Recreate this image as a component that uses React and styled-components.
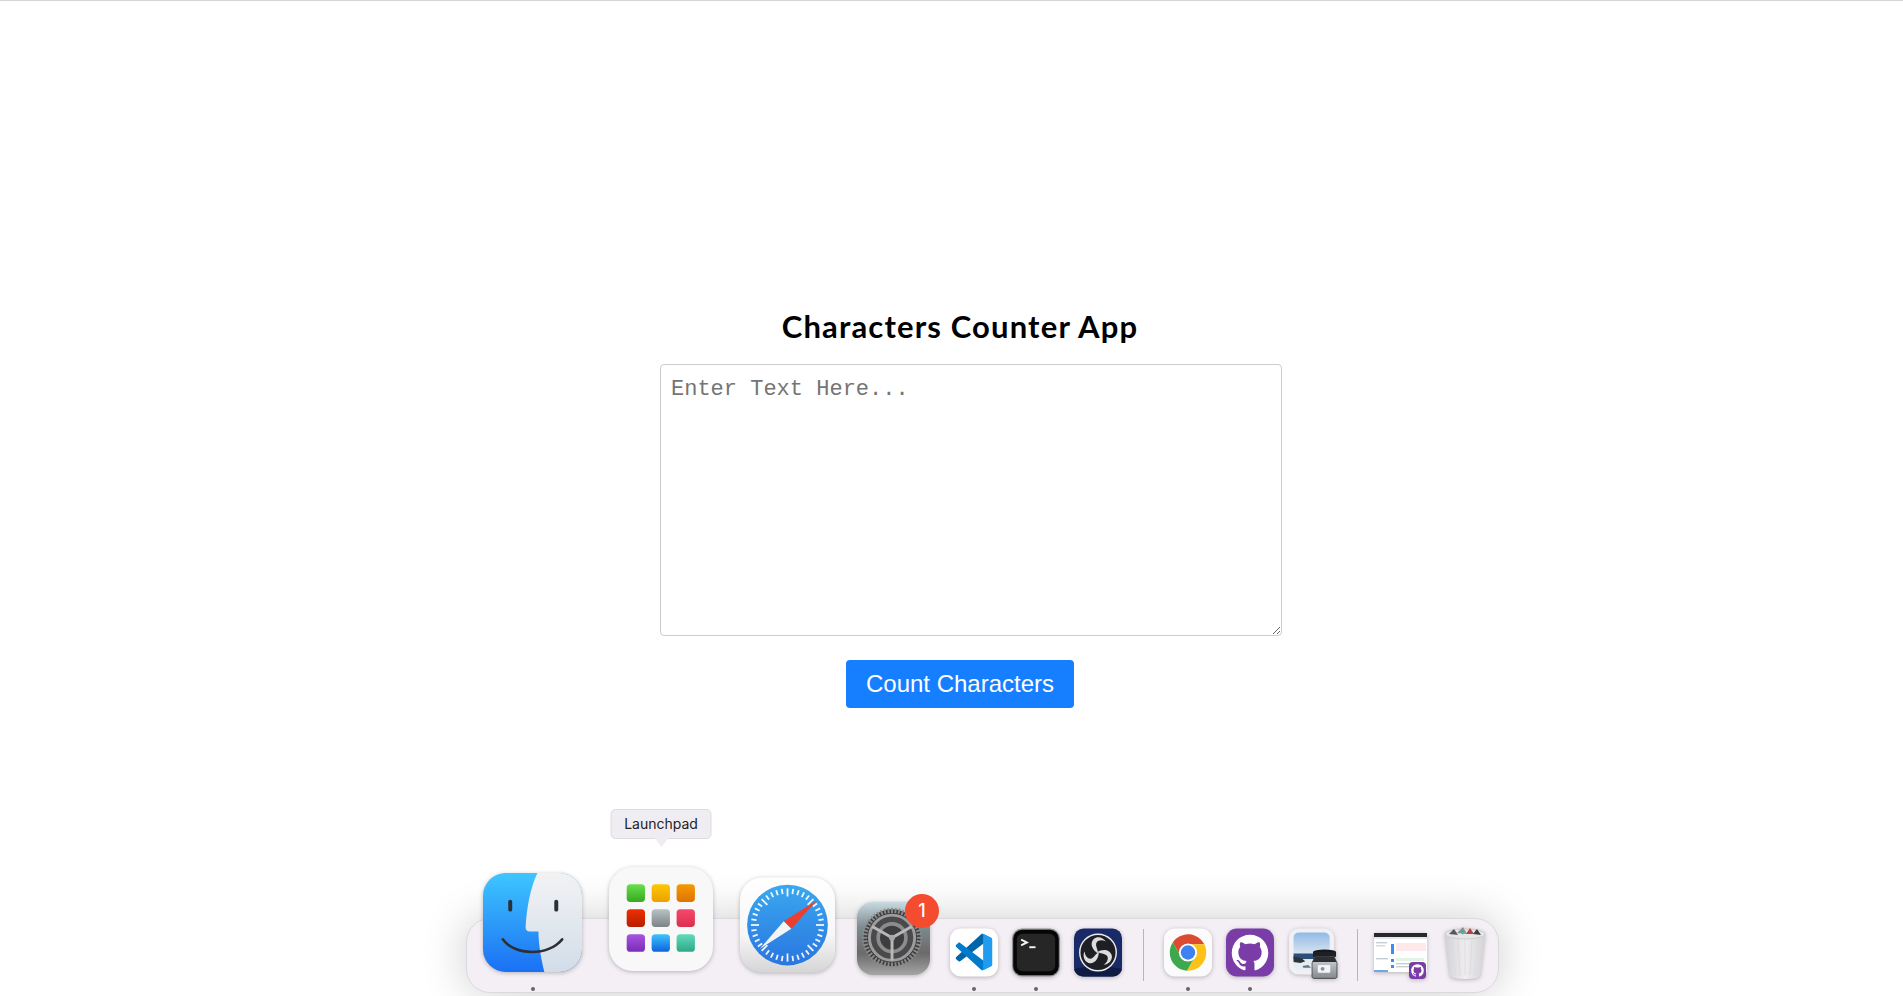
import React from 'react';
import styled, { createGlobalStyle } from 'styled-components';

const GlobalStyle = createGlobalStyle`
  html, body {
    margin: 0;
    padding: 0;
    background: #fff;
  }
`;

const Page = styled.div`
  position: relative;
  height: 996px;
  box-sizing: border-box;
  overflow: hidden;
  border-top: 1px solid #d4d4d4;
  display: flex;
  flex-direction: column;
  align-items: center;
  padding: 305px 0 0 17px;
`;

const Counter = styled.main`
  width: 600px;
  display: flex;
  flex-direction: column;
  align-items: center;
`;

const Title = styled.h1`
  margin: 0;
  font-family: 'Lato', sans-serif;
  font-weight: 700;
  font-size: 31px;
  line-height: 40px;
  letter-spacing: 1.15px;
  white-space: nowrap;
  color: #000;
`;

const TextBox = styled.textarea`
  display: block;
  align-self: flex-start;
  width: 600px;
  height: 250px;
  margin: 18px 0 0;
  padding: 10px;
  border: 1px solid #ccc;
  border-radius: 4px;
  outline: none;
  font-family: 'Liberation Mono', monospace;
  font-size: 22px;
  line-height: 30px;

  &::placeholder {
    color: #757575;
  }
`;

const CountButton = styled.button`
  margin-top: 24px;
  width: 228px;
  height: 48px;
  border: none;
  border-radius: 4px;
  background: #167fff;
  color: #fff;
  font-family: 'Liberation Sans', Arial, sans-serif;
  font-size: 24px;
`;

const Dock = styled.nav`
  position: absolute;
  left: 466px;
  top: 917px;
  width: 1033px;
  height: 75px;
  box-sizing: border-box;
  padding-left: 16px;
  display: flex;
  align-items: flex-end;
  background: #f3eff5;
  border: 1px solid #dcd9de;
  border-radius: 24px;
  box-shadow: 0 0 45px rgba(0, 0, 0, 0.2);
`;

const Item = styled.div`
  position: relative;
  flex: none;
  width: ${(p) => p.$w}px;
  height: ${(p) => p.$h}px;
  margin-left: ${(p) => p.$gap}px;
  margin-bottom: ${(p) => p.$bottom}px;

  & > svg {
    display: block;
    width: 100%;
    height: 100%;
    overflow: visible;
    filter: drop-shadow(0 1px 2px rgba(0, 0, 0, 0.25));
  }
`;

const RunningDot = styled.span`
  position: absolute;
  left: 50%;
  bottom: -${(p) => p.$drop}px;
  width: 4px;
  height: 4px;
  margin-left: -2px;
  border-radius: 50%;
  background: #666;
`;

const Separator = styled.div`
  flex: none;
  width: 1px;
  height: 52px;
  margin-left: ${(p) => p.$gap}px;
  margin-bottom: 11px;
  background: #b9b6bb;
`;

const Badge = styled.span`
  position: absolute;
  top: -8px;
  right: -9px;
  width: 34px;
  height: 34px;
  border-radius: 50%;
  background: #f54b2e;
  color: #fff;
  font-family: 'Inter', sans-serif;
  font-size: 18px;
  font-weight: 500;
  line-height: 34px;
  text-align: center;
`;

const Tooltip = styled.div`
  position: absolute;
  left: 50%;
  top: -58px;
  transform: translateX(-50%);
  width: 99px;
  height: 28px;
  border: 1px solid #dedbe0;
  border-radius: 5px;
  background: #f0edf2;
  color: #222;
  font-family: 'Inter', sans-serif;
  font-size: 14px;
  line-height: 28px;
  text-align: center;

  &::after {
    content: '';
    position: absolute;
    left: 50%;
    top: 100%;
    margin-left: -7px;
    border-style: solid;
    border-width: 9px 7px 0;
    border-color: #f0edf2 transparent transparent;
  }
`;

const FinderIcon = () => (
  <svg viewBox="0 0 100 100">
    <defs>
      <linearGradient id="finderBlue" x1="0" y1="0" x2="0" y2="1">
        <stop offset="0" stopColor="#3ec6ff" />
        <stop offset="1" stopColor="#1b70f4" />
      </linearGradient>
      <linearGradient id="finderGrey" x1="0" y1="0" x2="0" y2="1">
        <stop offset="0" stopColor="#f2f2f4" />
        <stop offset="1" stopColor="#d2dde9" />
      </linearGradient>
      <clipPath id="finderClip">
        <rect width="100" height="100" rx="23" />
      </clipPath>
    </defs>
    <g clipPath="url(#finderClip)">
      <rect width="100" height="100" fill="url(#finderBlue)" />
      <path
        d="M55 0C48 14 44 36 43 55C43 58 45 59 47 59H56C56 72 59 88 62 100H100V0Z"
        fill="url(#finderGrey)"
      />
    </g>
    <rect x="25.5" y="27" width="4" height="12" rx="2" fill="#2b3038" />
    <rect x="72" y="27" width="4" height="12" rx="2" fill="#2b3038" />
    <path d="M20 67C32 84 66 84 80 67" fill="none" stroke="#2c3036" strokeWidth="2.6" strokeLinecap="round" />
  </svg>
);

const launchpadTiles = [
  ['#68e04a', '#36a921'],
  ['#fdc800', '#eda000'],
  ['#f59a00', '#dd7400'],
  ['#ee3000', '#b81c00'],
  ['#b7c2c6', '#7e8385'],
  ['#f5486a', '#dc2f50'],
  ['#a855e0', '#7a2bb8'],
  ['#3fc4fb', '#0d62e0'],
  ['#5fdbbd', '#2fa884'],
];

const LaunchpadIcon = () => (
  <svg viewBox="0 0 100 100">
    <defs>
      {launchpadTiles.map(([from, to], i) => (
        <linearGradient key={from} id={`tile${i}`} x1="0" y1="0" x2="0" y2="1">
          <stop offset="0" stopColor={from} />
          <stop offset="1" stopColor={to} />
        </linearGradient>
      ))}
    </defs>
    <rect width="100" height="100" rx="23" fill="#f8f8f9" />
    {launchpadTiles.map(([from], i) => (
      <rect
        key={from}
        x={17 + (i % 3) * 24}
        y={16.6 + Math.floor(i / 3) * 24}
        width="17.6"
        height="17"
        rx="3.5"
        fill={`url(#tile${i})`}
      />
    ))}
  </svg>
);

const polar = (cx, cy, r, deg) => {
  const a = (deg * Math.PI) / 180;
  return [cx + r * Math.cos(a), cy + r * Math.sin(a)];
};

const safariTicks = Array.from({ length: 40 }, (_, i) => i * 9);

const SafariIcon = () => (
  <svg viewBox="0 0 100 100">
    <defs>
      <linearGradient id="safariBody" x1="0" y1="0" x2="0" y2="1">
        <stop offset="0" stopColor="#fff" />
        <stop offset="0.6" stopColor="#f7f7f7" />
        <stop offset="1" stopColor="#d5d5d5" />
      </linearGradient>
      <linearGradient id="safariDial" x1="0" y1="0" x2="0" y2="1">
        <stop offset="0" stopColor="#3aa8ef" />
        <stop offset="1" stopColor="#2a76e0" />
      </linearGradient>
    </defs>
    <rect width="100" height="100" rx="23" fill="url(#safariBody)" />
    <circle cx="50" cy="50" r="42.5" fill="url(#safariDial)" />
    {safariTicks.map((deg) => {
      const [x1, y1] = polar(50, 50, deg % 45 === 0 ? 30 : 33, deg);
      const [x2, y2] = polar(50, 50, 38.5, deg);
      return <line key={deg} x1={x1} y1={y1} x2={x2} y2={y2} stroke="#fff" strokeWidth="1.9" opacity="0.92" />;
    })}
    <path d="M81 24L54 54L46 46Z" fill="#ea3f2f" />
    <path d="M21 75L54 54L46 46Z" fill="#f4f4f4" />
  </svg>
);

const gearTeeth = Array.from({ length: 48 }, (_, i) => i * 7.5);

const SettingsIcon = () => (
  <svg viewBox="0 0 100 100">
    <defs>
      <linearGradient id="settingsBody" x1="0" y1="0" x2="0" y2="1">
        <stop offset="0" stopColor="#c9dae1" />
        <stop offset="0.35" stopColor="#7d8a8f" />
        <stop offset="0.7" stopColor="#6a6a6a" />
        <stop offset="1" stopColor="#a5a5a5" />
      </linearGradient>
    </defs>
    <rect width="100" height="100" rx="22" fill="url(#settingsBody)" />
    <circle cx="48" cy="49" r="39" fill="#3b3b3d" />
    {gearTeeth.map((deg) => {
      const [x1, y1] = polar(48, 49, 34, deg);
      const [x2, y2] = polar(48, 49, 41, deg);
      return <line key={deg} x1={x1} y1={y1} x2={x2} y2={y2} stroke="#8b8b8b" strokeWidth="2.6" />;
    })}
    <circle cx="48" cy="49" r="31" fill="#4a4a4c" stroke="#9d9d9d" strokeWidth="4" />
    <circle cx="48" cy="49" r="19" fill="#3d3d3f" stroke="#8c8c8c" strokeWidth="5" />
    <path d="M48 49V80M48 49L21 33.5M48 49L75 33.5" stroke="#b8b8b8" strokeWidth="4" fill="none" />
    <circle cx="48" cy="49" r="4" fill="#a8a8a8" />
  </svg>
);

const VsCodeIcon = () => (
  <svg viewBox="0 0 100 100">
    <rect width="100" height="100" rx="23" fill="#fff" />
    <g transform="translate(12 11) scale(0.76)">
      <path
        d="M96.4614 10.7962L75.8569 0.875542C73.4719 -0.272773 70.6217 0.211611 68.75 2.08333L1.29858 63.5824C-0.515693 65.2371 -0.513607 68.0946 1.30308 69.7466L6.81272 74.7552C8.29793 76.1054 10.5347 76.2048 12.1338 74.9917L93.3609 13.3699C96.086 11.3026 100 13.2462 100 16.6667V16.4275C100 14.0265 98.6246 11.8378 96.4614 10.7962Z"
        fill="#0065a9"
      />
      <path
        d="M96.4614 89.2038L75.8569 99.1245C73.4719 100.273 70.6217 99.7884 68.75 97.9167L1.29858 36.4176C-0.515693 34.7629 -0.513607 31.9054 1.30308 30.2534L6.81272 25.2448C8.29793 23.8946 10.5347 23.7952 12.1338 25.0083L93.3609 86.6301C96.086 88.6974 100 86.7538 100 83.3333V83.5725C100 85.9735 98.6246 88.1622 96.4614 89.2038Z"
        fill="#007acc"
      />
      <path
        d="M75.8578 99.1263C73.4721 100.274 70.6219 99.7885 68.75 97.9166C71.0564 100.223 75 98.5895 75 95.3278V4.67213C75 1.41039 71.0564 -0.223106 68.75 2.08329C70.6219 0.211402 73.4721 -0.273666 75.8578 0.873633L96.4587 10.7807C98.6234 11.8217 100 14.0112 100 16.4132V83.5871C100 85.9891 98.6234 88.1786 96.4586 89.2196L75.8578 99.1263Z"
        fill="#1f9cf0"
      />
    </g>
  </svg>
);

const TerminalIcon = () => (
  <svg viewBox="0 0 100 100">
    <rect width="100" height="100" rx="21" fill="#8c8f90" />
    <rect x="2.5" y="2.5" width="95" height="95" rx="19" fill="#060606" />
    <rect x="10" y="11" width="80" height="78" rx="12" fill="#262626" />
    <path d="M19 23L31 29L19 35" fill="none" stroke="#f4f4f4" strokeWidth="4" />
    <path d="M36 39H49" stroke="#f4f4f4" strokeWidth="4" />
  </svg>
);

const obsBlades = [0, 120, 240];

const ObsIcon = () => (
  <svg viewBox="0 0 100 100">
    <rect width="100" height="100" rx="20" fill="#1a2a68" />
    <path d="M0 84L50 76L100 84V82C100 92 92 100 80 100H20C8 100 0 92 0 82Z" fill="#0f1a45" />
    <circle cx="50" cy="50" r="38" fill="#1e1f24" stroke="#ececec" strokeWidth="3" />
    {obsBlades.map((deg) => (
      <path
        key={deg}
        d="M50 52C40 46 31 33 41 22C49 15 61 19 66 27C58 23 48 24 46 32C45 38 50 44 50 52Z"
        fill="#dcdcdc"
        transform={`rotate(${deg} 50 50)`}
      />
    ))}
  </svg>
);

const ChromeIcon = () => (
  <svg viewBox="0 0 100 100">
    <rect width="100" height="100" rx="23" fill="#fbfbfb" />
    <path d="M50 33L84 33A38 38 0 0 0 18.3 29.1L35.3 58.5Z" fill="#dd4a32" />
    <path d="M64.7 58.5L47.7 87.9A38 38 0 0 0 84 33L50 33Z" fill="#fbc116" />
    <path d="M35.3 58.5L18.3 29.1A38 38 0 0 0 47.7 87.9L64.7 58.5Z" fill="#3da84d" />
    <circle cx="50" cy="50" r="19" fill="#fff" />
    <circle cx="50" cy="50" r="15" fill="#3e82f1" />
  </svg>
);

const OCTOCAT =
  'M12 .297c-6.63 0-12 5.373-12 12 0 5.303 3.438 9.8 8.205 11.385.6.113.82-.258.82-.577 0-.285-.01-1.04-.015-2.04-3.338.724-4.042-1.61-4.042-1.61C4.422 18.07 3.633 17.7 3.633 17.7c-1.087-.744.084-.729.084-.729 1.205.084 1.838 1.236 1.838 1.236 1.07 1.835 2.809 1.305 3.495.998.108-.776.417-1.305.76-1.605-2.665-.3-5.466-1.332-5.466-5.93 0-1.31.465-2.38 1.235-3.22-.135-.303-.54-1.523.105-3.176 0 0 1.005-.322 3.3 1.23.96-.267 1.98-.399 3-.405 1.02.006 2.04.138 3 .405 2.28-1.552 3.285-1.23 3.285-1.23.645 1.653.24 2.873.12 3.176.765.84 1.23 1.91 1.23 3.22 0 4.61-2.805 5.625-5.475 5.92.42.36.81 1.096.81 2.22 0 1.606-.015 2.896-.03 3.286 0 .315.21.69.825.57C20.565 22.092 24 17.592 24 12.297c0-6.627-5.373-12-12-12';

const GithubDesktopIcon = () => (
  <svg viewBox="0 0 100 100">
    <rect width="100" height="100" rx="23" fill="#7a3ca6" />
    <path d={OCTOCAT} fill="#fff" transform="translate(12 12) scale(3.17)" />
  </svg>
);

const PreviewIcon = () => (
  <svg viewBox="0 0 100 100">
    <defs>
      <linearGradient id="previewSky" x1="0" y1="0" x2="0" y2="1">
        <stop offset="0" stopColor="#8fb9e8" />
        <stop offset="1" stopColor="#d8e4ef" />
      </linearGradient>
      <linearGradient id="previewGlass" x1="0" y1="0" x2="0" y2="1">
        <stop offset="0" stopColor="#d5d8db" />
        <stop offset="1" stopColor="#83888d" />
      </linearGradient>
      <clipPath id="previewClip">
        <rect x="9" y="8" width="76" height="78" rx="12" />
      </clipPath>
    </defs>
    <rect width="94" height="96" rx="20" fill="#f1f1f3" />
    <g clipPath="url(#previewClip)">
      <rect x="9" y="8" width="76" height="44" fill="url(#previewSky)" />
      <rect x="9" y="52" width="76" height="12" fill="#2d5078" />
      <rect x="9" y="64" width="76" height="22" fill="#e4edf4" />
      <path d="M9 58L26 62L34 68L24 72L9 70Z" fill="#2e3338" />
      <path d="M28 78L40 76L46 82H30Z" fill="#6d7378" />
    </g>
    <ellipse cx="74" cy="49" rx="24" ry="5" fill="#17181a" />
    <rect x="50" y="49" width="48" height="10" fill="#1f2022" />
    <path d="M54 59H94L100 72V100C100 103 98 104 96 104H52C50 104 48 103 48 100V72Z" fill="url(#previewGlass)" stroke="#2d2f32" strokeWidth="1.5" />
    <path d="M54 59H94L99 70H49Z" fill="#2d2f32" />
    <rect x="60" y="76" width="26" height="16" rx="2" fill="#f2f4f5" />
    <circle cx="70" cy="84" r="4" fill="#8a9096" />
  </svg>
);

const MiniOctocat = ({ x, y, size }) => (
  <g>
    <rect x={x} y={y} width={size} height={size} rx={size * 0.22} fill="#7a3ca6" />
    <path
      d={OCTOCAT}
      fill="#fff"
      transform={`translate(${x + size * 0.13} ${y + size * 0.13}) scale(${(size * 0.74) / 24})`}
    />
  </g>
);

const WindowThumb = () => (
  <svg viewBox="0 0 56 47">
    <rect width="53" height="39" y="0" fill="#fff" />
    <rect width="53" height="4" fill="#26282c" />
    <rect x="0" y="4" width="53" height="2" fill="#e4e8ec" />
    <rect x="17" y="11" width="3" height="10" fill="#3b8cf5" />
    <rect x="22" y="10" width="30" height="8" fill="#fde9e9" />
    <rect x="2" y="9" width="11" height="1.4" fill="#c5ced6" />
    <rect x="2" y="12" width="9" height="1.4" fill="#d2d8de" />
    <rect x="2" y="25" width="12" height="1.4" fill="#c5ced6" />
    <rect x="17" y="26" width="3" height="3" fill="#3b8cf5" />
    <rect x="17" y="32" width="3" height="3" fill="#3b8cf5" />
    <rect x="0" y="37" width="14" height="2" fill="#6ea8ec" />
    <rect x="22" y="25" width="28" height="3" fill="#e4f4e4" />
    <rect x="22" y="30" width="22" height="1.4" fill="#c5ced6" />
    <rect x="22" y="33" width="18" height="1.4" fill="#c5ced6" />
    <MiniOctocat x={35} y={29} size={17} />
  </svg>
);

const trashRibs = [8, 14, 21, 28, 34];

const TrashIcon = () => (
  <svg viewBox="0 0 42 54">
    <defs>
      <linearGradient id="trashBody" x1="0" y1="0" x2="1" y2="0">
        <stop offset="0" stopColor="#d2d2d4" />
        <stop offset="0.5" stopColor="#efedf0" />
        <stop offset="1" stopColor="#d3d3d5" />
      </linearGradient>
    </defs>
    <path d="M1 7L6 49C7 53 35 53 36 49L41 7Z" fill="url(#trashBody)" />
    {trashRibs.map((x) => (
      <path key={x} d={`M${x} 12L${21 + (x - 21) * 0.72} 48`} stroke="#dcdbde" strokeWidth="1" />
    ))}
    <ellipse cx="21" cy="7" rx="20" ry="5" fill="#e6e5e8" stroke="#c7c7c9" strokeWidth="0.8" />
    <path d="M5 7L10 2L14 8Z" fill="#55585c" />
    <path d="M13 6L19 0L23 7Z" fill="#8b8f93" />
    <path d="M22 7L26 1L30 7Z" fill="#b2463a" />
    <path d="M29 7L33 2L37 8Z" fill="#3a3d44" />
    <path d="M16 4L20 3L19 8Z" fill="#3fb59a" />
  </svg>
);

const dockApps = [
  { name: 'Finder', Icon: FinderIcon, w: 99, h: 99, gap: 0, bottom: 20, drop: 19 },
  { name: 'Launchpad', Icon: LaunchpadIcon, w: 104, h: 104, gap: 27, bottom: 21, tooltip: true },
  { name: 'Safari', Icon: SafariIcon, w: 95, h: 96, gap: 27, bottom: 19 },
  { name: 'System Settings', Icon: SettingsIcon, w: 73, h: 73, gap: 22, bottom: 17, badge: '1' },
  { name: 'VS Code', Icon: VsCodeIcon, w: 48, h: 49, gap: 20, bottom: 15, drop: 14 },
  { name: 'Terminal', Icon: TerminalIcon, w: 48, h: 49, gap: 14, bottom: 15, drop: 14 },
  { name: 'OBS', Icon: ObsIcon, w: 48, h: 49, gap: 14, bottom: 15 },
  { separator: true, gap: 21 },
  { name: 'Chrome', Icon: ChromeIcon, w: 48, h: 49, gap: 20, bottom: 15, drop: 14 },
  { name: 'GitHub Desktop', Icon: GithubDesktopIcon, w: 48, h: 49, gap: 14, bottom: 15, drop: 14 },
  { name: 'Preview', Icon: PreviewIcon, w: 48, h: 49, gap: 15, bottom: 15 },
  { separator: true, gap: 20 },
  { name: 'Window', Icon: WindowThumb, w: 56, h: 47, gap: 16, bottom: 12 },
  { name: 'Trash', Icon: TrashIcon, w: 42, h: 54, gap: 14, bottom: 11 },
];

const App = () => (
  <Page>
    <GlobalStyle />
    <Counter>
      <Title>Characters Counter App</Title>
      <TextBox placeholder="Enter Text Here..." />
      <CountButton>Count Characters</CountButton>
    </Counter>
    <Dock>
      {dockApps.map(({ name, Icon, w, h, gap, bottom, drop, badge, tooltip, separator }, i) =>
        separator ? (
          <Separator key={i} $gap={gap} />
        ) : (
          <Item key={name} $w={w} $h={h} $gap={gap} $bottom={bottom}>
            <Icon />
            {drop && <RunningDot $drop={drop} />}
            {badge && <Badge>{badge}</Badge>}
            {tooltip && <Tooltip>{name}</Tooltip>}
          </Item>
        )
      )}
    </Dock>
  </Page>
);

export default App;
